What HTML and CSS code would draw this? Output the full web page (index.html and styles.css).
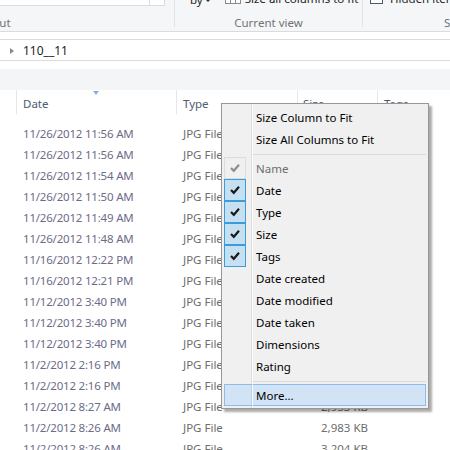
FILE: index.html
```html
<!DOCTYPE html>
<html>
<head>
<meta charset="utf-8">
<link rel="stylesheet" href="styles.css">
</head>
<body>
<div class="ribbon">
  <div class="group g1">
    <div class="g-top"><div class="combo"><span class="combo-btn"></span></div></div>
    <div class="g-label">Layout</div>
  </div>
  <div class="group g2">
    <div class="g-top">
      <span class="sortby">by<span class="caret"></span></span>
      <span class="fitall"><svg class="colicon" width="16" height="16" viewBox="0 0 16 16"><rect x="0.5" y="0.5" width="15" height="15" fill="#fff" stroke="#8a8a8a"/><line x1="5.5" y1="1" x2="5.5" y2="15" stroke="#8a8a8a"/><line x1="10.5" y1="1" x2="10.5" y2="15" stroke="#8a8a8a"/></svg>Size all columns to fit</span>
    </div>
    <div class="g-label">Current view</div>
  </div>
  <div class="group g3">
    <div class="g-top"><span class="cb"></span>Hidden items</div>
    <div class="g-label">Show/hide</div>
  </div>
</div>
<div class="gap1"></div>
<div class="address"><span class="tri"></span><span class="crumb">110__11</span></div>
<div class="gap2"></div>
<div class="strip"></div>
<div class="list">
  <div class="hdr">
    <div class="hc c0"></div>
    <div class="hc c1"><span class="sortarrow"></span>Date</div>
    <div class="hc c2">Type</div>
    <div class="hc c3">Size</div>
    <div class="hc c4">Tags</div>
  </div>
  <div class="rows">
    <div class="row"><div class="c0"></div><div class="c1 d">11/26/2012 11:56 AM</div><div class="c2 t">JPG File</div><div class="c3 s">3,112 KB</div><div class="c4"></div></div>
    <div class="row"><div class="c0"></div><div class="c1 d">11/26/2012 11:56 AM</div><div class="c2 t">JPG File</div><div class="c3 s">3,087 KB</div><div class="c4"></div></div>
    <div class="row"><div class="c0"></div><div class="c1 d">11/26/2012 11:54 AM</div><div class="c2 t">JPG File</div><div class="c3 s">2,941 KB</div><div class="c4"></div></div>
    <div class="row"><div class="c0"></div><div class="c1 d">11/26/2012 11:50 AM</div><div class="c2 t">JPG File</div><div class="c3 s">3,006 KB</div><div class="c4"></div></div>
    <div class="row"><div class="c0"></div><div class="c1 d">11/26/2012 11:49 AM</div><div class="c2 t">JPG File</div><div class="c3 s">2,875 KB</div><div class="c4"></div></div>
    <div class="row"><div class="c0"></div><div class="c1 d">11/26/2012 11:48 AM</div><div class="c2 t">JPG File</div><div class="c3 s">3,150 KB</div><div class="c4"></div></div>
    <div class="row"><div class="c0"></div><div class="c1 d">11/16/2012 12:22 PM</div><div class="c2 t">JPG File</div><div class="c3 s">2,990 KB</div><div class="c4"></div></div>
    <div class="row"><div class="c0"></div><div class="c1 d">11/16/2012 12:21 PM</div><div class="c2 t">JPG File</div><div class="c3 s">3,021 KB</div><div class="c4"></div></div>
    <div class="row"><div class="c0"></div><div class="c1 d">11/12/2012 3:40 PM</div><div class="c2 t">JPG File</div><div class="c3 s">2,804 KB</div><div class="c4"></div></div>
    <div class="row"><div class="c0"></div><div class="c1 d">11/12/2012 3:40 PM</div><div class="c2 t">JPG File</div><div class="c3 s">2,912 KB</div><div class="c4"></div></div>
    <div class="row"><div class="c0"></div><div class="c1 d">11/12/2012 3:40 PM</div><div class="c2 t">JPG File</div><div class="c3 s">3,044 KB</div><div class="c4"></div></div>
    <div class="row"><div class="c0"></div><div class="c1 d">11/2/2012 2:16 PM</div><div class="c2 t">JPG File</div><div class="c3 s">3,310 KB</div><div class="c4"></div></div>
    <div class="row"><div class="c0"></div><div class="c1 d">11/2/2012 2:16 PM</div><div class="c2 t">JPG File</div><div class="c3 s">3,178 KB</div><div class="c4"></div></div>
    <div class="row"><div class="c0"></div><div class="c1 d">11/2/2012 8:27 AM</div><div class="c2 t">JPG File</div><div class="c3 s">2,953 KB</div><div class="c4"></div></div>
    <div class="row"><div class="c0"></div><div class="c1 d">11/2/2012 8:26 AM</div><div class="c2 t">JPG File</div><div class="c3 s">2,983 KB</div><div class="c4"></div></div>
    <div class="row"><div class="c0"></div><div class="c1 d">11/2/2012 8:26 AM</div><div class="c2 t">JPG File</div><div class="c3 s">3,204 KB</div><div class="c4"></div></div>
  </div>
</div>

<div class="menu">
  <div class="gutter"></div>
  <div class="mi"><span class="box"></span><span class="lbl">Size Column to Fit</span></div>
  <div class="mi"><span class="box"></span><span class="lbl">Size All Columns to Fit</span></div>
  <div class="sep"></div>
  <div class="mi dis"><span class="box dbox"><svg width="20" height="20" viewBox="0 0 20 20"><path d="M6 10 L8.8 12.8 L14 6.8" fill="none" stroke="#8e8e8e" stroke-width="2.2"/></svg></span><span class="lbl">Name</span></div>
  <div class="mi"><span class="box on"><svg width="20" height="20" viewBox="0 0 20 20"><path d="M6 10 L8.8 12.8 L14 6.8" fill="none" stroke="#1a1a1a" stroke-width="2.2"/></svg></span><span class="lbl">Date</span></div>
  <div class="mi"><span class="box on"><svg width="20" height="20" viewBox="0 0 20 20"><path d="M6 10 L8.8 12.8 L14 6.8" fill="none" stroke="#1a1a1a" stroke-width="2.2"/></svg></span><span class="lbl">Type</span></div>
  <div class="mi"><span class="box on"><svg width="20" height="20" viewBox="0 0 20 20"><path d="M6 10 L8.8 12.8 L14 6.8" fill="none" stroke="#1a1a1a" stroke-width="2.2"/></svg></span><span class="lbl">Size</span></div>
  <div class="mi"><span class="box on"><svg width="20" height="20" viewBox="0 0 20 20"><path d="M6 10 L8.8 12.8 L14 6.8" fill="none" stroke="#1a1a1a" stroke-width="2.2"/></svg></span><span class="lbl">Tags</span></div>
  <div class="mi"><span class="box"></span><span class="lbl">Date created</span></div>
  <div class="mi"><span class="box"></span><span class="lbl">Date modified</span></div>
  <div class="mi"><span class="box"></span><span class="lbl">Date taken</span></div>
  <div class="mi"><span class="box"></span><span class="lbl">Dimensions</span></div>
  <div class="mi"><span class="box"></span><span class="lbl">Rating</span></div>
  <div class="sep"></div>
  <div class="mi hot"><span class="box"></span><span class="lbl">More...</span></div>
</div>
</body>
</html>
```

FILE: styles.css
```css
* { box-sizing: border-box; }
html, body { margin: 0; padding: 0; }
body {
  width: 450px;
  height: 450px;
  overflow: hidden;
  position: relative;
  background: #fff;
  font-family: "Noto Sans", "Open Sans", sans-serif;
  font-size: 11.5px;
  color: #1e1e1e;
}

/* Ribbon */
.ribbon {
  display: flex;
  height: 32px;
  background: #f5f6f7;
  border-bottom: 1px solid #dadbdc;
  overflow: hidden;
}
.group {
  height: 27px;
  border-right: 1px solid #e2e3e4;
  flex: none;
}
.g1 { width: 175px; }
.g2 { width: 188px; }
.g3 { flex: 1; border-right: none; }
.g-top {
  height: 14px;
  margin-top: -8px;
  display: flex;
  align-items: center;
  white-space: nowrap;
  line-height: 14px;
}
.g-label {
  margin-top: 9px;
  height: 16px;
  line-height: 16px;
  color: #6f7377;
  text-align: center;
  white-space: nowrap;
}
.g1 .g-label { text-align: left; margin-left: -26px; }
.g3 .g-label { text-align: left; padding-left: 81px; }

.combo {
  margin-left: -1px;
  margin-top: -1px;
  width: 166px;
  height: 15px;
  background: #fff;
  border: 1px solid #dcdcdc;
  display: flex;
  justify-content: flex-end;
}
.combo-btn {
  width: 15px;
  height: 100%;
  border-left: 1px solid #dcdcdc;
}

.g2 .g-top { padding-left: 15px; }
.sortby { display: flex; align-items: center; margin-top: 2px; }
.caret {
  margin-left: 2px;
  width: 0; height: 0;
  border-left: 3px solid transparent;
  border-right: 3px solid transparent;
  border-top: 3px solid #333;
}
.fitall { display: flex; align-items: center; margin-left: 14px; }
.colicon { margin-right: 4px; margin-top: -6px; }

.g3 .g-top { padding-left: 7px; }
.cb {
  width: 13px; height: 13px;
  border: 1px solid #4a5a6c;
  background: #fff;
  margin-right: 7px;
  margin-top: -3px;
}

/* Address bar */
.gap1 { height: 7px; }
.address {
  height: 22px;
  border-top: 1px solid #dcdcdc;
  border-bottom: 1px solid #dcdcdc;
  display: flex;
  align-items: center;
  padding-top: 1px;
}
.tri {
  margin-left: 10px;
  width: 0; height: 0;
  border-top: 3.5px solid transparent;
  border-bottom: 3.5px solid transparent;
  border-left: 4px solid #8a8a8a;
}
.crumb { margin-left: 9px; color: #1e1e1e; font-size: 12px; }
.gap2 { height: 8px; }
.strip { height: 21px; background: #f4f5f7; }

/* List */
.hdr { display: flex; height: 24px; }
.hc {
  border-right: 1px solid #e5e7ea;
  color: #4c5d71;
  line-height: 27px;
  padding-left: 6px;
  position: relative;
  white-space: nowrap;
  overflow: hidden;
}
.c0 { width: 17px; flex: none; }
.c1 { width: 160px; flex: none; padding-left: 6px; }
.c2 { width: 121px; flex: none; padding-left: 6px; }
.c3 { width: 80px; flex: none; }
.c4 { flex: 1; padding-left: 6px; }
.hdr .c0 { padding-left: 0; }
.hdr .c3 { padding-left: 5px; }
.hdr .c4 { border-right: none; }
.sortarrow {
  position: absolute;
  left: 76px;
  top: 1px;
  width: 0; height: 0;
  border-left: 3.5px solid transparent;
  border-right: 3.5px solid transparent;
  border-top: 4px solid #8ab0d8;
}
.rows { padding-top: 9px; }
.row {
  display: flex;
  height: 21px;
  line-height: 21px;
  white-space: nowrap;
}
.row > div { overflow: hidden; }
.d { color: #6d6b88; letter-spacing: -0.2px; }
.t { color: #6d6d6d; }
.s { color: #6d6d6d; text-align: right; padding-right: 9px; border-right: 1px solid transparent; }

/* Context menu */
.menu {
  position: absolute;
  left: 221px;
  top: 103px;
  width: 208px;
  background: #f0f0f0;
  border: 1px solid #979797;
  padding: 2px;
  box-shadow: 3px 3px 2px rgba(0,0,0,0.33);
}
.gutter {
  position: absolute;
  left: 29px;
  top: 0;
  bottom: 0;
  width: 2px;
  border-left: 1px solid rgba(0,0,0,0.08);
  border-right: 1px solid rgba(255,255,255,0.8);
  z-index: 2;
}
.mi {
  height: 22px;
  display: flex;
  align-items: center;
  color: #000;
  white-space: nowrap;
}
.mi.dis { color: #6d6d6d; }
.box {
  width: 22px;
  height: 22px;
  flex: none;
  display: flex;
  align-items: center;
  justify-content: center;
}
.box.on { border: 1px solid #3c9bd9; background: #c5e0f1; }
.box.dbox { border: 1px solid #dcdcdc; }
.lbl { margin-left: 10px; }
.sep { height: 7px; padding-top: 4px; padding-left: 28px; }
.sep::after {
  content: "";
  display: block;
  height: 1px;
  background: #d9d9d9;
}
.mi.hot {
  background: #d1e3f4;
  border: 1px solid #8ebdea;
}
.mi.hot .box { width: 21px; height: 20px; }
.mi.hot .lbl { margin-left: 10px; }
```
